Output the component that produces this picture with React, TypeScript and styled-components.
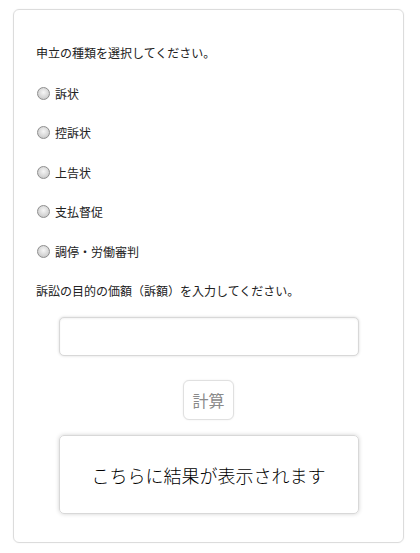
import styled, { createGlobalStyle } from "styled-components";

const GlobalStyle = createGlobalStyle`
    body {
        margin: 0;
        background: #fff;
        font-family: "Noto Sans CJK JP", "Liberation Sans", sans-serif;
        color: #222;
    }
`;

const Page = styled.div`
    padding: 9px 16px 11px 13px;
`;

const Card = styled.div`
    display: flex;
    flex-direction: column;
    width: 391px;
    box-sizing: border-box;
    border: 1px solid #dcdcdc;
    border-radius: 6px;
    padding: 34px 22px 28px;
    box-shadow: 0 0 2px rgba(0, 0, 0, 0.06);
`;

const Question = styled.p<{ $top: number }>`
    margin: ${(p) => p.$top}px 0 0;
    font-size: 12px;
    line-height: 18px;
`;

const OptionList = styled.div`
    display: flex;
    flex-direction: column;
    gap: 19.5px;
    margin-top: 21px;
    padding-left: 1px;
`;

const Option = styled.label`
    display: flex;
    align-items: center;
    height: 20px;
    font-size: 12px;
`;

const Radio = styled.input`
    appearance: none;
    width: 13px;
    height: 13px;
    margin: 0 5px 0 0;
    border-radius: 50%;
    border: 1px solid #8e8e8e;
    background: radial-gradient(circle at 50% 40%, #f6f6f6 0%, #d8d8d8 55%, #bdbdbd 100%);
    box-sizing: border-box;
`;

const AmountInput = styled.input`
    align-self: center;
    width: 300px;
    height: 39px;
    margin-top: 17px;
    box-sizing: border-box;
    border: 1px solid #d8d8d8;
    border-radius: 5px;
    box-shadow: 0 0 3px rgba(0, 0, 0, 0.15), inset 0 1px 2px rgba(0, 0, 0, 0.05);
    font-size: 16px;
    padding: 0 10px;
    outline: none;
`;

const CalcButton = styled.button`
    align-self: center;
    width: 51px;
    height: 40px;
    margin-top: 24px;
    border: 1px solid #e0e0e0;
    border-radius: 6px;
    background: #fff;
    color: #8a8a8a;
    font-family: inherit;
    font-size: 16px;
    padding: 0;
    box-shadow: 0 0 2px rgba(0, 0, 0, 0.08);
`;

const ResultBox = styled.div`
    align-self: center;
    display: flex;
    align-items: center;
    justify-content: center;
    width: 300px;
    height: 79px;
    margin-top: 15px;
    box-sizing: border-box;
    border: 1px solid #d8d8d8;
    border-radius: 5px;
    box-shadow: 0 0 4px rgba(0, 0, 0, 0.18);
    font-size: 18px;
    font-weight: 300;
    color: #000;
`;

const options = ["訴状", "控訴状", "上告状", "支払督促", "調停・労働審判"];

export default function App() {
    return (
        <>
            <GlobalStyle />
            <Page>
                <Card>
                    <Question $top={0}>申立の種類を選択してください。</Question>
                    <OptionList>
                        {options.map((o) => (
                            <Option key={o}>
                                <Radio type="radio" name="kind" />
                                {o}
                            </Option>
                        ))}
                    </OptionList>
                    <Question $top={21}>訴訟の目的の価額（訴額）を入力してください。</Question>
                    <AmountInput type="text" />
                    <CalcButton>計算</CalcButton>
                    <ResultBox>こちらに結果が表示されます</ResultBox>
                </Card>
            </Page>
        </>
    );
}
